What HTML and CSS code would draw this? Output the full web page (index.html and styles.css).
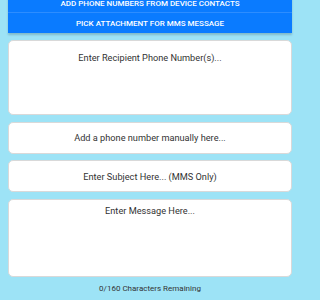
FILE: index.html
```html
<!DOCTYPE html>
<html>
<head>
<meta charset="utf-8">
<link rel="stylesheet" href="styles.css">
</head>
<body>
<div class="page">
  <div class="actions">
    <div class="action action-first">Add phone numbers from device contacts</div>
    <div class="action">Pick attachment for MMS message</div>
  </div>
  <div class="field field-recipients">Enter Recipient Phone Number(s)...</div>
  <div class="field field-single">Add a phone number manually here...</div>
  <div class="field field-single">Enter Subject Here... (MMS Only)</div>
  <div class="field field-message">Enter Message Here...</div>
  <div class="counter">0/160 Characters Remaining</div>
</div>
</body>
</html>
```

FILE: styles.css
```css
html, body {
  margin: 0;
  padding: 0;
  background: #9de3f6;
}
body {
  font-family: Roboto, "Liberation Sans", sans-serif;
  width: 300px;
  height: 300px;
  overflow: hidden;
}
.page {
  display: flex;
  flex-direction: column;
  gap: 6.5px;
  padding: 0 8px;
  margin-top: -7px;
}
.actions {
  background: #0a7bff;
  box-shadow: 0 2px 2px rgba(0, 0, 0, 0.18);
  display: flex;
  flex-direction: column;
  margin-bottom: 0.5px;
}
.action {
  height: 20px;
  display: flex;
  align-items: center;
  justify-content: center;
  color: #fff;
  font-size: 8px;
  font-weight: 500;
  text-transform: uppercase;
}
.action-first {
  height: 19px;
  padding-top: 2px;
  box-sizing: border-box;
}
.action + .action {
  border-top: 1px solid #2d8dff;
}
.field {
  background: #fff;
  border: 1px solid #d9d9d9;
  border-radius: 5px;
  box-sizing: border-box;
  color: #333;
  font-size: 9.2px;
  text-align: center;
}
.field-recipients {
  height: 75px;
  padding-top: 10.5px;
}
.field-single {
  height: 32px;
  display: flex;
  align-items: center;
  justify-content: center;
}
.field-message {
  height: 78px;
  padding-top: 5.5px;
}
.counter {
  color: #333;
  font-size: 8px;
  text-align: center;
  margin-top: 1px;
}
```
